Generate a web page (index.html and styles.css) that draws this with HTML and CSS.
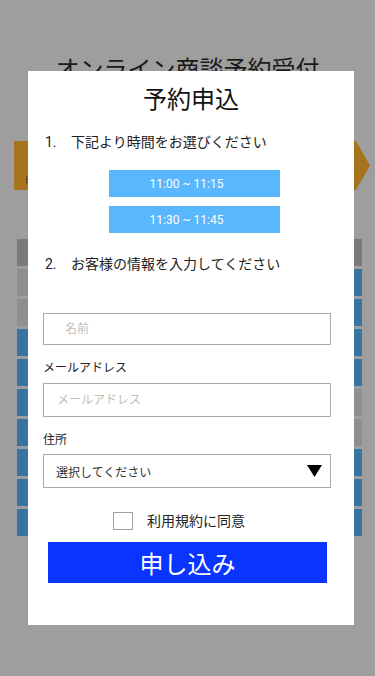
FILE: index.html
```html
<!DOCTYPE html>
<html lang="ja">
<head>
<meta charset="utf-8">
<meta name="viewport" content="width=device-width, initial-scale=1">
<title>オンライン商談予約受付</title>
<link rel="stylesheet" href="styles.css">
</head>
<body>
<div class="page">
  <h1 class="page-title">オンライン商談予約受付</h1>
  <div class="band"><span class="band-label">日時</span></div>
  <div class="schedule">
    <div class="row"><span class="cell c-head"></span><span class="cell c-head"></span></div>
    <div class="row"><span class="cell c-off"></span><span class="cell c-on"></span></div>
    <div class="row"><span class="cell c-off"></span><span class="cell c-on"></span></div>
    <div class="row"><span class="cell c-on"></span><span class="cell c-on"></span></div>
    <div class="row"><span class="cell c-on"></span><span class="cell c-on"></span></div>
    <div class="row"><span class="cell c-on"></span><span class="cell c-off"></span></div>
    <div class="row"><span class="cell c-on"></span><span class="cell c-off"></span></div>
    <div class="row"><span class="cell c-on"></span><span class="cell c-on"></span></div>
    <div class="row"><span class="cell c-on"></span><span class="cell c-on"></span></div>
    <div class="row"><span class="cell c-on"></span><span class="cell c-on"></span></div>
  </div>
</div>
<div class="overlay">
  <div class="modal">
    <h2 class="modal-title">予約申込</h2>
    <p class="step"><span class="step-no">1.</span>下記より時間をお選びください</p>
    <div class="slots">
      <button class="slot" type="button">11:00 ~ 11:15</button>
      <button class="slot" type="button">11:30 ~ 11:45</button>
    </div>
    <p class="step step-2"><span class="step-no">2.</span>お客様の情報を入力してください</p>
    <input class="field field-name" type="text" placeholder="名前">
    <label class="field-label">メールアドレス</label>
    <input class="field field-mail" type="text" placeholder="メールアドレス">
    <label class="field-label">住所</label>
    <div class="select">
      <span>選択してください</span>
      <svg class="select-arrow" width="15" height="12" viewBox="0 0 15 12"><polygon points="0,0 15,0 7.5,12" fill="#000"/></svg>
    </div>
    <label class="agree"><span class="checkbox"></span>利用規約に同意</label>
    <button class="submit" type="button">申し込み</button>
  </div>
</div>
</body>
</html>
```

FILE: styles.css
```css
html, body {
  margin: 0;
  padding: 0;
}

body {
  background: #9e9e9e;
  font-family: Roboto, "Noto Sans CJK JP", sans-serif;
  height: 676px;
  overflow: hidden;
  color: #222;
}

.page-title {
  margin: 0;
  padding-top: 52px;
  font-size: 24px;
  line-height: 36px;
  font-weight: 400;
  text-align: center;
  color: #1a1a1a;
}

.band {
  margin: 53px 0 0 14px;
  width: 356px;
  height: 49px;
  background: #a6741d;
  clip-path: polygon(0 0, 342px 0, 100% 50%, 342px 100%, 0 100%);
  display: flex;
  align-items: flex-end;
}

.band-label {
  font-size: 7px;
  line-height: 8px;
  padding: 0 0 6px 11px;
  color: #2e2208;
}

.schedule {
  margin: 49px 0 0 17px;
  width: 345px;
  display: flex;
  flex-direction: column;
  gap: 3px;
}

.row {
  display: flex;
  justify-content: space-between;
  height: 27px;
}

.cell {
  width: 150px;
}

.c-head { background: #7a7a7a; }
.c-off { background: #8f8f8f; }
.c-on { background: #3874a0; }

.overlay {
  position: fixed;
  inset: 0;
  padding: 71px 0 0 28px;
}

.modal {
  width: 326px;
  height: 554px;
  background: #fff;
  display: flex;
  flex-direction: column;
  align-items: flex-start;
}

.modal-title {
  align-self: stretch;
  margin: 11px 0 0;
  font-size: 24px;
  line-height: 36px;
  font-weight: 400;
  text-align: center;
  color: #111;
}

.step {
  margin: 14px 0 0 17px;
  font-size: 14px;
  line-height: 20px;
  display: flex;
  color: #222;
}

.step-no {
  width: 26px;
}

.slots {
  margin: 18px 0 0 81px;
  display: flex;
  flex-direction: column;
  gap: 9px;
}

.slot {
  width: 171px;
  height: 27px;
  padding: 0 16px 0 0;
  border: none;
  background: #58b7fd;
  color: #fff;
  font-family: Roboto, sans-serif;
  font-size: 12px;
}

.step-2 {
  margin-top: 21px;
}

.field {
  box-sizing: border-box;
  margin: 0 0 0 15px;
  width: 288px;
  border: 1px solid #a9a9a9;
  border-radius: 0;
  font-family: Roboto, "Noto Sans CJK JP", sans-serif;
  font-size: 12px;
  color: #222;
  outline: none;
}

.field::placeholder {
  color: #bdbdbd;
}

.field-name {
  margin-top: 39px;
  height: 32px;
  padding: 0 0 0 21px;
}

.field-mail {
  margin-top: 6px;
  height: 34px;
  padding: 0 0 0 13px;
}

.field-label {
  margin: 15px 0 0 15px;
  font-size: 12px;
  line-height: 17px;
  color: #222;
}

.select {
  box-sizing: border-box;
  margin: 5px 0 0 15px;
  width: 288px;
  height: 34px;
  border: 1px solid #a9a9a9;
  padding: 0 8px 0 12px;
  display: flex;
  align-items: center;
  justify-content: space-between;
  font-size: 12px;
  color: #333;
}

.select-arrow {
  display: block;
}

.agree {
  margin: 23px 0 0 85px;
  display: flex;
  align-items: center;
  gap: 14px;
  font-size: 14px;
  line-height: 20px;
  color: #222;
}

.checkbox {
  box-sizing: border-box;
  width: 20px;
  height: 18px;
  border: 1px solid #a0a0a0;
  background: #fff;
}

.submit {
  margin: 11px 0 0 20px;
  width: 279px;
  height: 41px;
  padding: 0;
  border: none;
  background: #0a34ff;
  color: #fff;
  font-family: "Noto Sans CJK JP", sans-serif;
  font-size: 24px;
  line-height: 41px;
}
```
